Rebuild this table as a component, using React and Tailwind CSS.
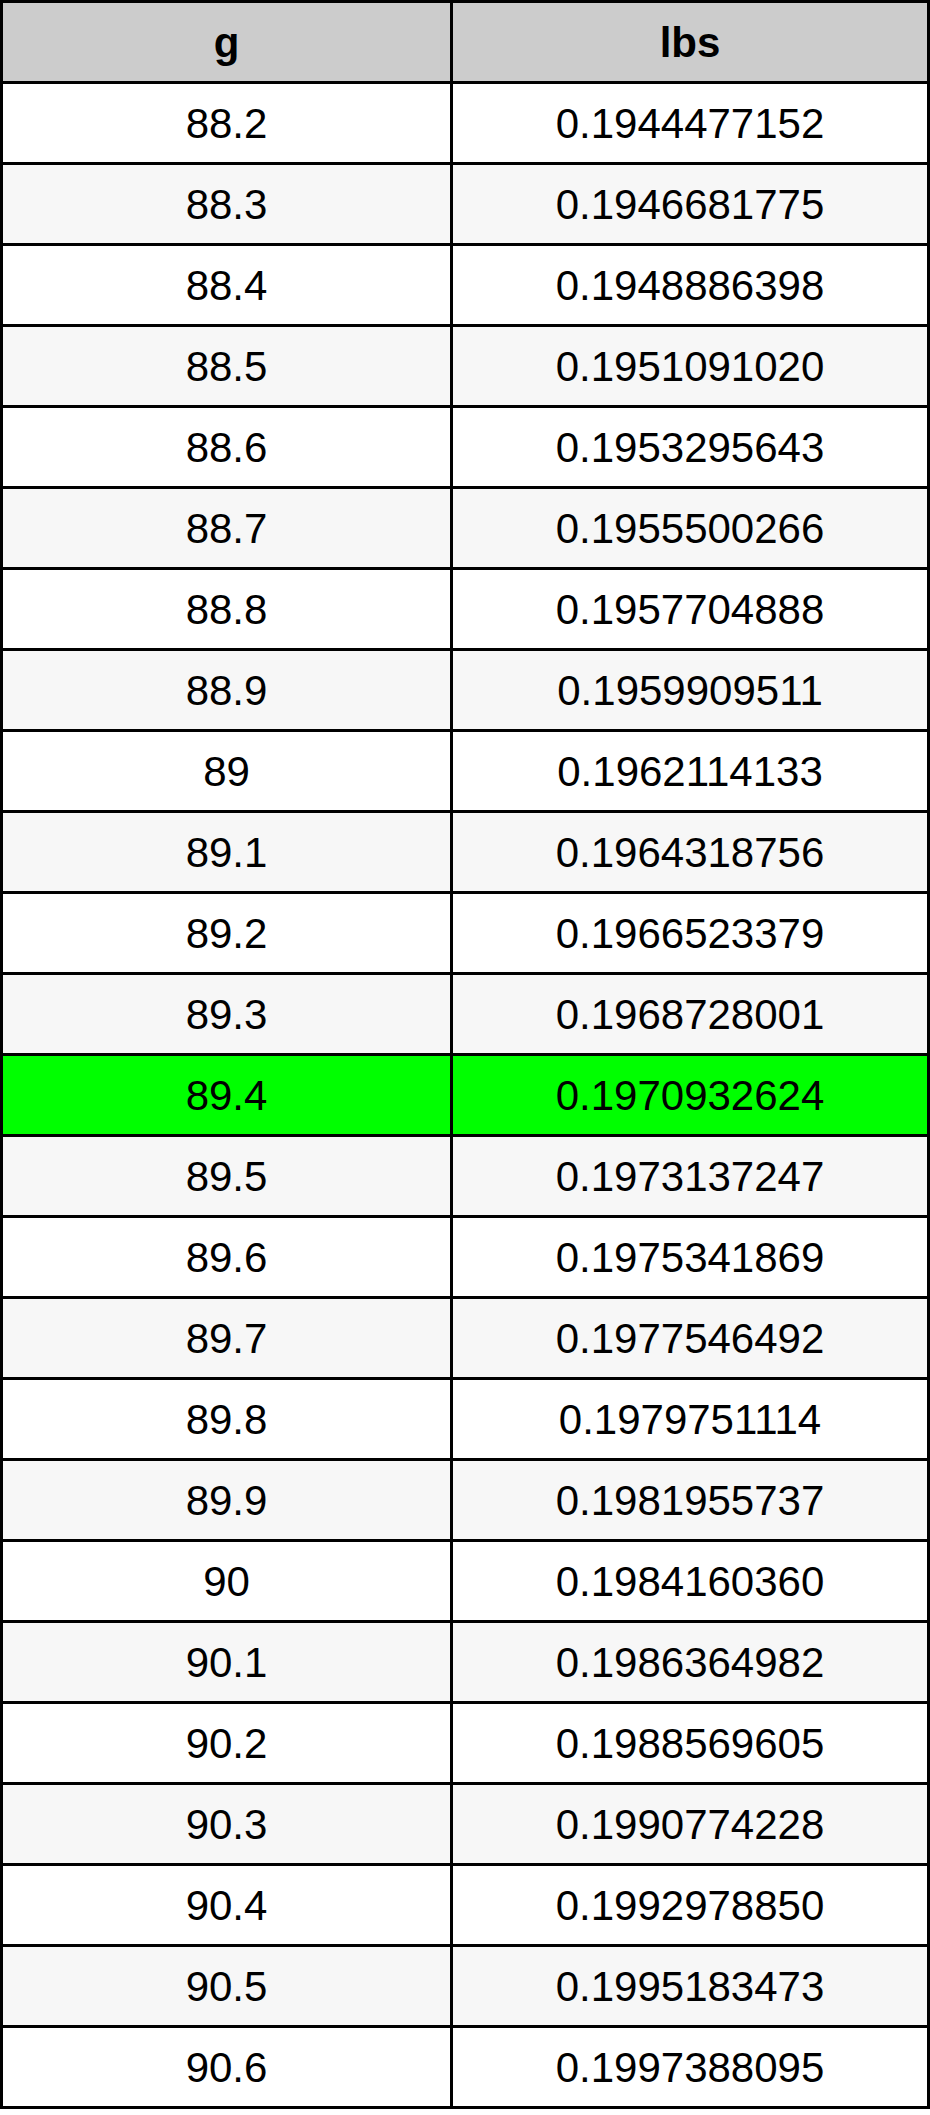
import React from "react";

const ROWS = [
  ["88.2", "0.1944477152"],
  ["88.3", "0.1946681775"],
  ["88.4", "0.1948886398"],
  ["88.5", "0.1951091020"],
  ["88.6", "0.1953295643"],
  ["88.7", "0.1955500266"],
  ["88.8", "0.1957704888"],
  ["88.9", "0.1959909511"],
  ["89", "0.1962114133"],
  ["89.1", "0.1964318756"],
  ["89.2", "0.1966523379"],
  ["89.3", "0.1968728001"],
  ["89.4", "0.1970932624"],
  ["89.5", "0.1973137247"],
  ["89.6", "0.1975341869"],
  ["89.7", "0.1977546492"],
  ["89.8", "0.1979751114"],
  ["89.9", "0.1981955737"],
  ["90", "0.1984160360"],
  ["90.1", "0.1986364982"],
  ["90.2", "0.1988569605"],
  ["90.3", "0.1990774228"],
  ["90.4", "0.1992978850"],
  ["90.5", "0.1995183473"],
  ["90.6", "0.1997388095"],
];

const HIGHLIGHT = "89.4";

export default function App() {
  return (
    <div className="bg-white w-[930px] h-[2115px]" style={{ fontFamily: '"Liberation Sans", Arial, sans-serif' }}>
      <div className="border-[3px] border-black text-black text-[42px]">
        <div className="flex h-[78px] bg-[#cccccc] font-bold">
          <div className="w-[450px] border-r-[3px] border-black flex items-center justify-center">g</div>
          <div className="flex-1 flex items-center justify-center">lbs</div>
        </div>
        {ROWS.map(([g, lbs], i) => {
          const bg = g === HIGHLIGHT ? "bg-[#00ff00]" : i % 2 === 1 ? "bg-[#f7f7f7]" : "bg-white";
          return (
            <div key={g} className={`flex h-[81px] border-t-[3px] border-black ${bg}`}>
              <div className="w-[450px] border-r-[3px] border-black flex items-center justify-center">{g}</div>
              <div className="flex-1 flex items-center justify-center">{lbs}</div>
            </div>
          );
        })}
      </div>
    </div>
  );
}
